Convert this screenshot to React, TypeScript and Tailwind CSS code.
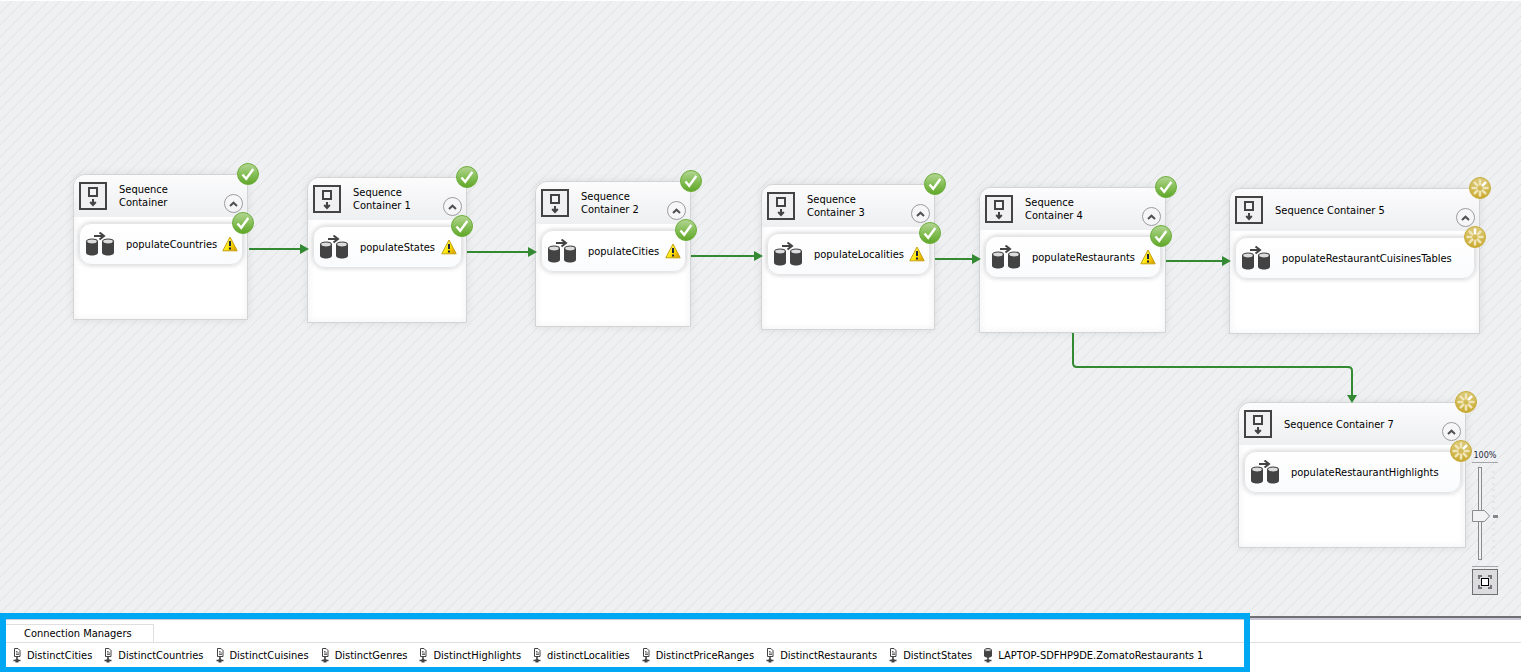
type Status = "done" | "running";

interface SequenceNode {
  title: string;
  task: string;
  place: string;
  status: Status;
  spoke: number;
  taskSpoke: number;
  warning: boolean;
}

const nodes: SequenceNode[] = [
  { title: "Sequence Container", task: "populateCountries", place: "left-[73px] top-[174px] w-[175px]", status: "done", spoke: 0, taskSpoke: 0, warning: true },
  { title: "Sequence Container 1", task: "populateStates", place: "left-[307px] top-[177px] w-[160px]", status: "done", spoke: 0, taskSpoke: 0, warning: true },
  { title: "Sequence Container 2", task: "populateCities", place: "left-[535px] top-[181px] w-[156px]", status: "done", spoke: 0, taskSpoke: 0, warning: true },
  { title: "Sequence Container 3", task: "populateLocalities", place: "left-[761px] top-[184px] w-[174px]", status: "done", spoke: 0, taskSpoke: 0, warning: true },
  { title: "Sequence Container 4", task: "populateRestaurants", place: "left-[979px] top-[187px] w-[187px]", status: "done", spoke: 0, taskSpoke: 0, warning: true },
  { title: "Sequence Container 5", task: "populateRestaurantCuisinesTables", place: "left-[1229px] top-[188px] w-[251px]", status: "running", spoke: 1, taskSpoke: 0, warning: false },
  { title: "Sequence Container 7", task: "populateRestaurantHighlights", place: "left-[1238px] top-[402px] w-[228px]", status: "running", spoke: 1, taskSpoke: 1, warning: false },
];

const connections = [
  "DistinctCities",
  "DistinctCountries",
  "DistinctCuisines",
  "DistinctGenres",
  "DistinctHighlights",
  "distinctLocalities",
  "DistinctPriceRanges",
  "DistinctRestaurants",
  "DistinctStates",
];

function SequenceIcon() {
  return (
    <svg width="28" height="28" viewBox="0 0 28 28" className="shrink-0" aria-hidden="true">
      <rect x="1" y="1" width="26" height="26" fill="#f0f0f2" stroke="#434343" strokeWidth="2" />
      <rect x="10" y="6" width="8" height="8" fill="#f4f4f6" stroke="#434343" strokeWidth="2" />
      <path d="M14 17v6M11.200 20L14 23l2.800-3" fill="none" stroke="#434343" strokeWidth="2" />
    </svg>
  );
}

function DataFlowIcon() {
  return (
    <svg width="29" height="24" viewBox="0 0 29 24" className="shrink-0" aria-hidden="true">
      <path d="M8 4h10M13.500 0.500L18 4l-4.500 3.500" fill="none" stroke="#434343" strokeWidth="2" />
      {[0, 16].map((x) => (
        <g key={x} transform={`translate(${x} 0)`}>
          <path d="M0 9.500V20.500C0 22.300 2.500 23.500 6 23.500s6-1.200 6-3V9.500z" fill="#434343" />
          <ellipse cx="6" cy="9.500" rx="5.400" ry="2.500" fill="#dcdcde" stroke="#434343" strokeWidth="1.200" />
        </g>
      ))}
    </svg>
  );
}

function WarningIcon() {
  return (
    <svg width="16" height="16" viewBox="0 0 16 16" className="shrink-0" role="img" aria-label="Warning">
      <defs>
        <linearGradient id="warn" x1="0" y1="0" x2="1" y2="0.600">
          <stop offset="0.300" stopColor="#fff56a" />
          <stop offset="0.600" stopColor="#ffe600" />
          <stop offset="1" stopColor="#e0a800" />
        </linearGradient>
      </defs>
      <path d="M8 1L15.200 14.800H0.800z" fill="url(#warn)" stroke="#c4a010" strokeLinejoin="round" />
      <path d="M8 5v5M8 11.500v2" stroke="#1c2340" strokeWidth="2" />
    </svg>
  );
}

function DoneBadge() {
  return (
    <svg width="22" height="22" viewBox="0 0 22 22" role="img" aria-label="Succeeded">
      <defs>
        <linearGradient id="done" x1="0" y1="0" x2="0" y2="1">
          <stop offset="0" stopColor="#b5d694" />
          <stop offset="0.500" stopColor="#86bf58" />
          <stop offset="1" stopColor="#5fa626" />
        </linearGradient>
      </defs>
      <circle cx="11" cy="11" r="10.500" fill="url(#done)" stroke="#6cae3b" />
      <path d="M5.500 11.500l3.700 4.300L16.300 6" fill="none" stroke="#fff" strokeWidth="2.400" />
    </svg>
  );
}

function RunningBadge({ spoke }: { spoke: number }) {
  return (
    <svg width="22" height="22" viewBox="0 0 22 22" role="img" aria-label="Running">
      <defs>
        <linearGradient id="running" x1="0" y1="0" x2="0" y2="1">
          <stop offset="0" stopColor="#dccb7e" />
          <stop offset="1" stopColor="#c9a92c" />
        </linearGradient>
      </defs>
      <circle cx="11" cy="11" r="10.500" fill="url(#running)" stroke="#c8ac3c" />
      {[0, 1, 2, 3, 4, 5, 6, 7].map((i) => (
        <path
          key={i}
          d="M11 7.200V3.600"
          transform={`rotate(${i * 45} 11 11)`}
          stroke={i === spoke ? "#ffffff" : "#f0e5b6"}
          strokeWidth="2.600"
          strokeLinecap="round"
        />
      ))}
    </svg>
  );
}

function Badge({ status, spoke }: { status: Status; spoke: number }) {
  return (
    <span className="absolute -top-3 -right-3 z-10">
      {status === "done" ? <DoneBadge /> : <RunningBadge spoke={spoke} />}
    </span>
  );
}

function SequenceContainer({ node }: { node: SequenceNode }) {
  return (
    <section
      className={`absolute h-[146px] rounded-t-xl border border-[#d3d4d6] bg-white shadow-[0_0_8px_rgba(0,0,0,0.08),inset_0_0_8px_rgba(0,0,0,0.06)] ${node.place}`}
    >
      <Badge status={node.status} spoke={node.spoke} />
      <header className="flex h-[42px] items-center gap-3 rounded-t-xl bg-linear-to-b from-[#fcfcfd] to-[#eeeff1] pl-[5px] pr-1">
        <SequenceIcon />
        <h2 className={node.status === "done" ? "w-16" : ""}>{node.title}</h2>
        <button
          type="button"
          aria-label={`Collapse ${node.title}`}
          className="mb-1 ml-auto flex size-[19px] shrink-0 items-center justify-center self-end rounded-full border border-[#9c9c9e] bg-[#f6f6f8]"
        >
          <svg width="9" height="6" viewBox="0 0 9 6" aria-hidden="true">
            <path d="M1 5l3.500-3.300L8 5" fill="none" stroke="#505052" strokeWidth="2" />
          </svg>
        </button>
      </header>
      <div className="relative mt-[6px] mr-1 ml-[5px] flex h-[42px] items-center rounded-xl border border-[#e4e5e7] bg-linear-to-b from-white to-[#fafbfd] pr-1 pl-[6px] shadow-[0_0_5px_rgba(0,0,0,0.22)]">
        <Badge status={node.status} spoke={node.taskSpoke} />
        <DataFlowIcon />
        <span className="ml-[11px]">{node.task}</span>
        {node.warning && (
          <span className="ml-auto">
            <WarningIcon />
          </span>
        )}
      </div>
    </section>
  );
}

function Connectors() {
  return (
    <svg className="absolute inset-0 h-full w-full" aria-hidden="true">
      <g fill="none" stroke="#338a33" strokeWidth="2">
        <path d="M249 249H301" />
        <path d="M467 252H529" />
        <path d="M691 256H755" />
        <path d="M935 259H973" />
        <path d="M1166 261H1223" />
        <path d="M1073 333V363Q1073 367 1077 367H1348Q1352 367 1352 371V396" />
      </g>
      <g fill="#338a33">
        <path d="M309 249l-9-5v10z" />
        <path d="M537 252l-9-5v10z" />
        <path d="M763 256l-9-5v10z" />
        <path d="M981 259l-9-5v10z" />
        <path d="M1231 261l-9-5v10z" />
        <path d="M1352 403l-5-8h10z" />
      </g>
    </svg>
  );
}

function ZoomControl() {
  return (
    <div className="absolute right-[23px] bottom-[21px] flex w-[26px] flex-col items-center">
      <label htmlFor="zoom" className="text-[9px] leading-3 text-[#1e2a44]">
        100%
      </label>
      <div className="relative mt-px h-[105px] w-full border-y border-[#a5a5a9]">
        <svg width="26" height="103" viewBox="0 0 26 103" aria-hidden="true">
          <rect x="6.500" y="4.500" width="3" height="92" fill="#f2f2f4" stroke="#8b8b8e" />
          <path d="M20 9h3M20 15h3M20 21h3M20 27h3M20 33h3M20 39h3M20 45h3M20 60h3M20 66h3M20 72h3M20 78h3M20 84h3M20 90h3" stroke="#dcdcdf" />
          <path d="M0.500 47.500h12l5 5.500-5 5.500h-12z" fill="#f2f2f4" stroke="#8b8b8e" />
          <path d="M21 53.500h5" stroke="#85858a" strokeWidth="3" />
        </svg>
        <input
          id="zoom"
          type="range"
          min="10"
          max="500"
          defaultValue="100"
          className="absolute inset-0 h-full w-full cursor-pointer opacity-0 [writing-mode:vertical-lr]"
        />
      </div>
      <button
        type="button"
        aria-label="Zoom to fit"
        className="mt-[2px] flex size-[26px] items-center justify-center border border-[#707073] bg-[#dcdcde]"
      >
        <svg width="14" height="14" viewBox="0 0 14 14" aria-hidden="true">
          <path d="M1 4V1h3M10 1h3v3M13 10v3h-3M4 13H1v-3" fill="none" stroke="#77777b" strokeWidth="2" />
          <rect x="3.500" y="3.500" width="7" height="7" fill="#fff" stroke="#000" />
        </svg>
      </button>
    </div>
  );
}

function FileConnectionIcon() {
  return (
    <svg width="8" height="15" viewBox="0 0 8 15" className="shrink-0" aria-hidden="true">
      <path d="M1.500 0.500h3.500l2 2V8.500H1.500z" fill="#fff" stroke="#434343" />
      <path d="M3 3.500h1.500M3 5h3M3 6.500h3" stroke="#66666a" />
      <path d="M4 9v5M0.500 12.500h7" stroke="#434343" strokeWidth="1.600" />
      <path d="M2.500 11.200h3v3.300h-3z" fill="#434343" />
    </svg>
  );
}

function DatabaseConnectionIcon() {
  return (
    <svg width="8" height="15" viewBox="0 0 8 15" className="shrink-0" aria-hidden="true">
      <path d="M0 2v5.500C0 9 1.800 9.600 4 9.600S8 9 8 7.500V2z" fill="#434343" />
      <ellipse cx="4" cy="2" rx="3.500" ry="1.500" fill="#d8d8da" stroke="#434343" />
      <path d="M4 9v5M0.500 12.500h7" stroke="#434343" strokeWidth="1.600" />
      <path d="M2.500 11.500h3v3h-3z" fill="#434343" />
    </svg>
  );
}

export default function App() {
  return (
    <main className="flex min-h-screen flex-col overflow-hidden bg-white font-['DejaVu_Sans_Condensed','DejaVu_Sans',sans-serif] text-[11px] leading-[13px] text-black">
      <div className="relative flex-1 border-t border-white bg-[#eff0f2] bg-[linear-gradient(135deg,transparent_46%,#e0e1e3_46%,#e0e1e3_54%,transparent_54%)] bg-size-[12px_12px]">
        <div className="absolute -top-px left-0 h-full w-full">
          {nodes.map((node) => (
            <SequenceContainer key={node.title} node={node} />
          ))}
          <Connectors />
        </div>
        <ZoomControl />
      </div>

      <footer className="relative border-t-2 border-[#707074] pb-[5px]">
        <div className="flex h-6 items-end border-t-2 border-[#c9c9d8]">
          <h2 className="flex h-[18px] w-[154px] items-center border border-b-0 border-[#dfdfe2] pl-[23px]">
            Connection Managers
          </h2>
        </div>
        <ul className="flex h-[25px] items-center gap-3 border-t border-[#dfdfe2] pl-[13px] whitespace-nowrap">
          {connections.map((name) => (
            <li key={name} className="flex items-center gap-[6px]">
              <FileConnectionIcon />
              {name}
            </li>
          ))}
          <li className="flex items-center gap-[6px]">
            <DatabaseConnectionIcon />
            LAPTOP-SDFHP9DE.ZomatoRestaurants 1
          </li>
        </ul>
        <div className="pointer-events-none absolute -top-[5px] bottom-0 left-0 w-[1250px] border-6 border-b-5 border-[#00a8f3]" />
      </footer>
    </main>
  );
}
